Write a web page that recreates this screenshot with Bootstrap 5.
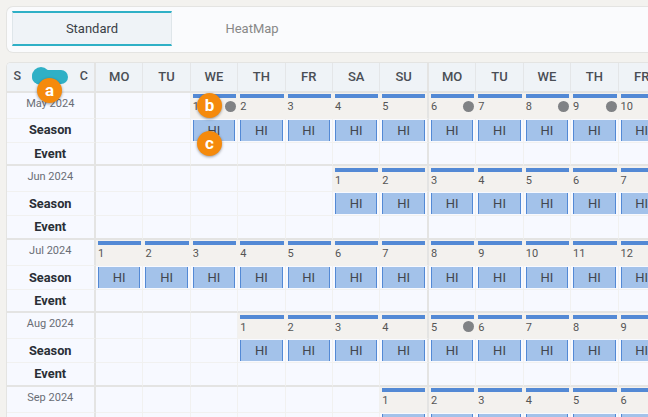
<!doctype html>
<html lang="en"><head><meta charset="utf-8"><title>Calendar</title>
<link rel="stylesheet" href="https://cdn.jsdelivr.net/npm/bootstrap@5.3.0/dist/css/bootstrap.min.css">
<style>
html,body{height:417px;overflow:hidden}
body{background:#f3f2ef;font-family:Roboto,"Liberation Sans",sans-serif;color:#3a3f46;padding:5.5px 0 0 5.5px;position:relative}
.tabbar{height:47px;background:#fafbfd;border:1px solid #e4e4e2;border-right:0;border-radius:7px 0 0 7px;padding:4.5px 5.5px;margin-bottom:9.5px}
.tabitem{width:160px;height:35px;line-height:31px;font-size:13px;text-align:center;color:#888;border:1px solid transparent;border-width:2px 1px}
.tabitem.on{background:#eff3f7;color:#3a3f46;border-color:#2fb0c6 #dfe6ea}
.cal-wrap{width:643px;height:356px;overflow:hidden;border:1px solid #e4e4e2;border-width:1px 0 0 1px;border-radius:5px 0 0 0}
.cal{table-layout:fixed;border-collapse:separate;border-spacing:0;width:706.9px;background:#f7f9ff}
.cal td,.cal th{padding:0;border-right:1px solid #f1f1f0;border-bottom:1px solid #f1f1f0;text-align:center;vertical-align:middle}
.cal col.lab{width:89.5px}.cal col.dy{width:47.4px}.cal col.wk{width:48.6px}
.cal thead th{height:29.5px;background:#eff3f7;font-size:13px;font-weight:500;color:#4a4e55;border-right-color:#e4e6e8;border-bottom:2px solid #e4e4e3}
.cal .sep,.cal .wkend{border-right:2px solid #e4e4e3!important}
.cal tr.r1>*{height:26px}.cal tr.r2>*{height:24px}.cal tr.r3>*{height:23.6px}
.cal tr.r3>*{border-bottom:2px solid #e4e4e3}
.cal tr.r1 .mon{font-size:11px;color:#696d75;vertical-align:top;padding-top:3px}
.cal .lbl{font-size:12.8px;font-weight:700;color:#2a2f36}
.cal td.day{background:#f3f1ee;border-right:0;border-bottom-color:transparent;position:relative;text-align:left;vertical-align:top;padding:1.5px 2px 0}
.dbar{display:block;height:4px;background:#5389d5}
.dnum{display:block;font-size:11px;line-height:14px;margin-top:2px;color:#555}
.dot{position:absolute;right:2px;top:8px;width:11px;height:11px;border-radius:50%;background:#808285}
.hi{display:block;margin:0 2px;height:21px;line-height:21px;background:#a3c2ea;border-left:1px solid #5389d5;border-right:1px solid #5389d5;font-size:13px;color:#42464e;text-align:center}
.switchy{display:flex;align-items:center;justify-content:space-between;padding:0 6px 0 7px;font-size:12.5px;font-weight:500;color:#4a4e55}
.pill{display:block;width:36px;height:14px;border-radius:7px;background:#2fb0c6;position:relative}
.pill::before{content:"";position:absolute;left:0;top:-3px;width:18px;height:18px;border-radius:50%;background:#2fb0c6}
.marker{position:absolute;width:25px;height:25px;border-radius:50%;background:#f58a0c;color:#fff;font-weight:700;font-size:17px;line-height:24px;text-align:center;box-shadow:0 1px 3px rgba(0,0,0,.4);font-family:Roboto,sans-serif}
.m-a{left:37px;top:78px}.m-b{left:197px;top:93px}.m-c{left:197px;top:131px}
</style></head><body>
<div class="tabbar d-flex"><div class="tabitem on">Standard</div><div class="tabitem">HeatMap</div></div>
<div class="cal-wrap"><table class="cal" id="cal"></table></div>
<span class="marker m-a">a</span><span class="marker m-b">b</span><span class="marker m-c">c</span>
<script>
var days=['MO','TU','WE','TH','FR','SA','SU','MO','TU','WE','TH','FR','SA'];
var months=[['May 2024',2,{1:1,6:1,8:1,9:1}],['Jun 2024',5,{}],['Jul 2024',0,{}],['Aug 2024',3,{5:1}],['Sep 2024',6,{}]];
var h='<colgroup><col class="lab">';
days.forEach(function(d,i){h+='<col class="'+(i==6?'wk':'dy')+'">';});
h+='</colgroup><thead><tr><th class="sep"><div class="switchy"><span>S</span><span class="pill"></span><span>C</span></div></th>';
days.forEach(function(d,i){h+='<th'+(i==6?' class="wkend"':'')+'>'+d+'</th>';});
h+='</tr></thead><tbody>';
months.forEach(function(m,k){
 var r1='<td class="sep mon">'+m[0]+'</td>',r2='<td class="sep lbl">Season</td>',r3='<td class="sep lbl">Event</td>';
 days.forEach(function(d,i){
  var n=i-m[1]+1,c=i==6?' class="wkend"':'';
  if(n>0){
   r1+='<td class="day'+(i==6?' wkend':'')+'"><span class="dbar"></span><span class="dnum">'+n+'</span>'+(m[2][n]?'<span class="dot"></span>':'')+'</td>';
   r2+='<td'+c+'><span class="hi">HI</span></td>';
  }else{r1+='<td'+c+'></td>';r2+='<td'+c+'></td>';}
  r3+='<td'+c+'></td>';
 });
 h+='<tr class="r1">'+r1+'</tr><tr class="r2">'+r2+'</tr><tr class="r3">'+r3+'</tr>';
});
document.getElementById('cal').innerHTML=h+'</tbody>';
</script>
<script src="https://cdn.jsdelivr.net/npm/bootstrap@5.3.0/dist/js/bootstrap.bundle.min.js"></script>
</body></html>
